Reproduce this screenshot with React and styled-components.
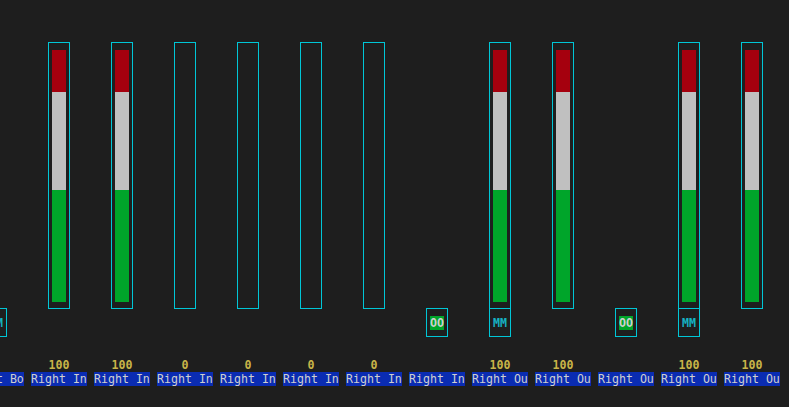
import React from "react";
import styled, { createGlobalStyle } from "styled-components";

const GlobalStyle = createGlobalStyle`
  html, body {
    margin: 0;
    padding: 0;
    background: #1e1e1e;
    overflow: hidden;
  }
  body {
    width: 789px;
    height: 407px;
    font-family: "DejaVu Sans Mono", "Liberation Mono", monospace;
  }
`;

const Strip = styled.div`
  display: flex;
  gap: 7px;
  margin-left: -32px;
  padding-top: 42px;
`;

const Channel = styled.div`
  width: 56px;
  flex: none;
  display: flex;
  flex-direction: column;
  align-items: center;
`;

const Meter = styled.div`
  box-sizing: border-box;
  width: 22px;
  height: 267px;
  border: 1px solid #00c6d6;
  padding: 7px 3px 6px;
  display: flex;
  flex-direction: column;
`;

const MeterGap = styled.div`
  height: 267px;
`;

const Level = styled.div`
  flex: ${(p) => p.$size} 0 0;
  background: ${(p) => p.$color};
`;

const ModeBox = styled.div`
  box-sizing: border-box;
  width: 22px;
  height: 29px;
  margin-top: -1px;
  border: 1px solid #00c6d6;
  display: flex;
  align-items: center;
  justify-content: center;
`;

const ModeGap = styled.div`
  height: 28px;
`;

const ModeText = styled.span`
  font-size: 11.6px;
  line-height: 14px;
  height: 14px;
  width: 14px;
  text-align: center;
  font-weight: bold;
  color: ${(p) => (p.$on ? "#cfcfcf" : "#16b2c2")};
  background: ${(p) => (p.$on ? "#00a52a" : "transparent")};
`;

const Value = styled.div`
  margin-top: 21px;
  height: 14px;
  line-height: 14px;
  font-size: 11.6px;
  font-weight: bold;
  color: #c9b548;
`;

const Label = styled.div`
  width: 56px;
  height: 14px;
  line-height: 14px;
  font-size: 11.6px;
  color: #cfcfcf;
  background: #0a2cb2;
  white-space: nowrap;
  overflow: hidden;
`;

const channels = [
  { label: "Right Bo", mode: "MM" },
  { label: "Right In", meter: true, value: 100 },
  { label: "Right In", meter: true, value: 100 },
  { label: "Right In", meter: "empty", value: 0 },
  { label: "Right In", meter: "empty", value: 0 },
  { label: "Right In", meter: "empty", value: 0 },
  { label: "Right In", meter: "empty", value: 0 },
  { label: "Right In", mode: "OO" },
  { label: "Right Ou", meter: true, value: 100, mode: "MM" },
  { label: "Right Ou", meter: true, value: 100 },
  { label: "Right Ou", mode: "OO" },
  { label: "Right Ou", meter: true, value: 100, mode: "MM" },
  { label: "Right Ou", meter: true, value: 100 },
];

const App = () => {
  return (
    <>
      <GlobalStyle />
      <Strip>
        {channels.map((ch, i) => (
          <Channel key={i}>
            {ch.meter ? (
              <Meter>
                {ch.meter === true && (
                  <>
                    <Level $size={42} $color="#a5000e" />
                    <Level $size={98} $color="#c0c0c0" />
                    <Level $size={112} $color="#00a52a" />
                  </>
                )}
              </Meter>
            ) : (
              <MeterGap />
            )}
            {ch.mode ? (
              <ModeBox>
                <ModeText $on={ch.mode === "OO"}>{ch.mode}</ModeText>
              </ModeBox>
            ) : (
              <ModeGap />
            )}
            <Value>{ch.value !== undefined ? ch.value : "\u00a0"}</Value>
            <Label>{ch.label}</Label>
          </Channel>
        ))}
      </Strip>
    </>
  );
};

export default App;
